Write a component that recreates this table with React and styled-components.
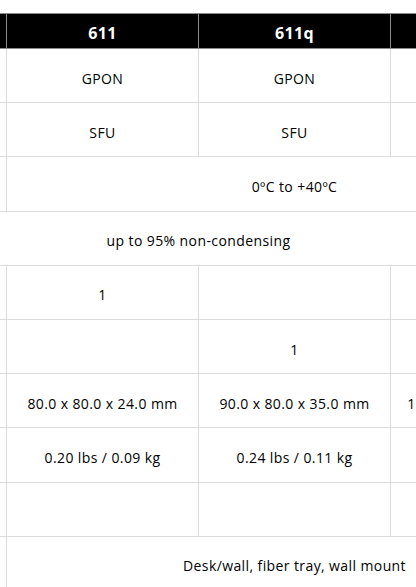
import React from "react";
import styled, { createGlobalStyle } from "styled-components";

// comparison table, scrolled so the label column sits just off the left edge

const GlobalStyle = createGlobalStyle`
  html, body {
    margin: 0;
    padding: 0;
    background: #ffffff;
  }
  body {
    font-family: "Open Sans", "Liberation Sans", sans-serif;
    color: #000000;
  }
`;

// visible window onto the wide table
const Viewport = styled.div`
  width: 416px;
  height: 587px;
  overflow: hidden;
  padding-top: 13px;
  box-sizing: border-box;
`;

const Table = styled.table`
  border-collapse: collapse;
  table-layout: fixed;
  width: 960px;
  margin-left: -186px;
`;

const Col = styled.col`
  width: 192px;
`;

const HeadCell = styled.th`
  height: 31px;
  padding: 3px 0 0;
  background: #000000;
  color: #ffffff;
  border: 1px solid #8a8a8a;
  font-size: 16px;
  font-weight: 700;
  letter-spacing: 0.3px;
  text-align: center;
  vertical-align: middle;
`;

const Cell = styled.td`
  height: 47.2px;
  padding: 6px 8px 0;
  border: 1px solid #dcdcdc;
  font-size: 14px;
  font-weight: 400;
  letter-spacing: 0.4px;
  line-height: 20px;
  text-align: center;
  vertical-align: middle;
  white-space: nowrap;
  overflow: hidden;
`;

const models = ["611", "611q", "622", "633"];

const rows = [
  { cells: ["GPON", "GPON", "", ""] },
  { cells: ["SFU", "SFU", "", ""] },
  { span: 3, text: "0ºC to +40ºC" },
  { full: true, text: "up to 95% non-condensing" },
  { cells: ["1", "", "", ""] },
  { cells: ["", "1", "", ""] },
  {
    cells: [
      "80.0 x 80.0 x 24.0 mm",
      "90.0 x 80.0 x 35.0 mm",
      "135.0 x 95.0 x 35.0 mm",
      "",
    ],
  },
  { cells: ["0.20 lbs / 0.09 kg", "0.24 lbs / 0.11 kg", "", ""] },
  { cells: ["", "", "", ""] },
  { span: 3, text: "Desk/wall, fiber tray, wall mount" },
];

const Row = ({ row }) => {
  if (row.full) {
    return (
      <tr>
        <Cell colSpan={4}>{row.text}</Cell>
        <Cell />
      </tr>
    );
  }
  if (row.span) {
    return (
      <tr>
        <Cell />
        <Cell colSpan={row.span}>{row.text}</Cell>
        <Cell />
      </tr>
    );
  }
  return (
    <tr>
      <Cell />
      {row.cells.map((c, i) => (
        <Cell key={i}>{c}</Cell>
      ))}
    </tr>
  );
};

const App = () => {
  return (
    <>
      <GlobalStyle />
      <Viewport>
        <Table>
          <colgroup>
            <Col />
            {models.map((m) => (
              <Col key={m} />
            ))}
          </colgroup>
          <thead>
            <tr>
              <HeadCell />
              {models.map((m, i) => (
                <HeadCell key={m}>{i < 2 ? m : ""}</HeadCell>
              ))}
            </tr>
          </thead>
          <tbody>
            {rows.map((r, i) => (
              <Row key={i} row={r} />
            ))}
          </tbody>
        </Table>
      </Viewport>
    </>
  );
};

export default App;
